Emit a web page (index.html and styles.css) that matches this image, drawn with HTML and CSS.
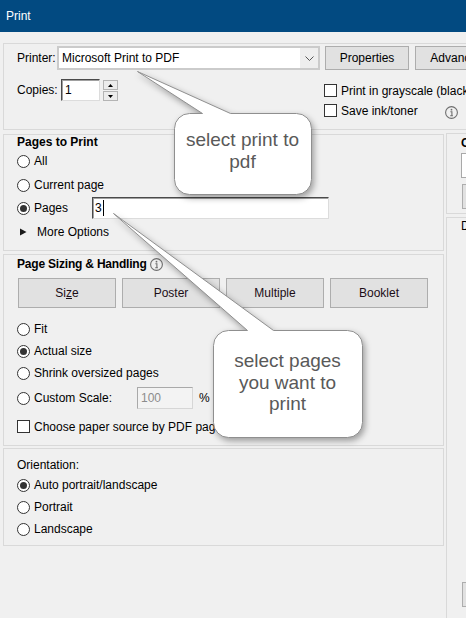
FILE: index.html
```html
<!DOCTYPE html>
<html>
<head>
<meta charset="utf-8">
<title>Print</title>
<link rel="stylesheet" href="styles.css">
</head>
<body>
<div class="window">
  <div class="titlebar">Print</div>
  <div class="content">
    <div class="group top">
      <div class="row1">
        <span class="lbl-printer">Printer:</span>
        <div class="select">
          <span class="select-text">Microsoft Print to PDF</span>
          <span class="select-btn"><svg width="9" height="5" viewBox="0 0 9 5"><polyline points="0.5,0.5 4.5,4.5 8.5,0.5" fill="none" stroke="#555" stroke-width="1"/></svg></span>
        </div>
        <button class="btn btn-props">Properties</button>
        <button class="btn btn-adv">Advanced</button>
      </div>
      <div class="row2">
        <div class="copies">
          <span class="lbl-copies">Copies:</span>
          <div class="field input-copies">1</div>
          <div class="spin">
            <span class="spin-btn"><svg width="5" height="3" viewBox="0 0 5 3"><polygon points="0,3 2.5,0 5,3" fill="#000"/></svg></span>
            <span class="spin-btn"><svg width="5" height="3" viewBox="0 0 5 3"><polygon points="0,0 2.5,3 5,0" fill="#000"/></svg></span>
          </div>
        </div>
        <div class="checks">
          <div class="check"><span class="cbox"></span>Print in grayscale (black and white)</div>
          <div class="check"><span class="cbox"></span><span class="ink-text">Save ink/toner</span>
            <svg class="info info-ink" width="13" height="13" viewBox="0 0 13 13"><circle cx="6.5" cy="6.5" r="5.9" fill="none" stroke="#6e6e6e" stroke-width="1.1"/><circle cx="6.5" cy="3.7" r="0.9" fill="#6e6e6e"/><path d="M5.4 5.7h1.5v4.1M5.2 9.8h2.7" stroke="#6e6e6e" stroke-width="1.1" fill="none"/></svg>
          </div>
        </div>
      </div>
    </div>

    <div class="cols">
      <div class="left">
        <div class="group pages">
          <div class="gtitle">Pages to Print</div>
          <div class="radio-row"><span class="radio"></span>All</div>
          <div class="radio-row r-current"><span class="radio"></span>Current page</div>
          <div class="radio-row r-pages"><span class="radio on"></span><span class="pages-lbl">Pages</span>
            <div class="field pages-input"><span>3</span><span class="caret"></span></div>
          </div>
          <div class="radio-row r-more"><svg class="tri" width="7" height="8" viewBox="0 0 7 8"><polygon points="0,0.5 6.5,4 0,7.5" fill="#1a1a1a"/></svg><span class="more-text">More Options</span></div>
        </div>

        <div class="group sizing">
          <div class="stitle"><span class="gtitle-inline">Page Sizing &amp; Handling</span>
            <svg class="info info-size" width="13" height="13" viewBox="0 0 13 13"><circle cx="6.5" cy="6.5" r="5.9" fill="none" stroke="#6e6e6e" stroke-width="1.1"/><circle cx="6.5" cy="3.7" r="0.9" fill="#6e6e6e"/><path d="M5.4 5.7h1.5v4.1M5.2 9.8h2.7" stroke="#6e6e6e" stroke-width="1.1" fill="none"/></svg>
          </div>
          <div class="sbtns">
            <button class="btn sbtn">Si<u>z</u>e</button>
            <button class="btn sbtn">Poster</button>
            <button class="btn sbtn">Multiple</button>
            <button class="btn sbtn">Booklet</button>
          </div>
          <div class="radio-row r-fit"><span class="radio"></span>Fit</div>
          <div class="radio-row"><span class="radio on"></span>Actual size</div>
          <div class="radio-row"><span class="radio"></span>Shrink oversized pages</div>
          <div class="radio-row r-custom"><span class="radio"></span><span class="custom-lbl">Custom Scale:</span>
            <div class="field scale-input">100</div><span class="pct">%</span>
          </div>
          <div class="check r-choose"><span class="cbox"></span>Choose paper source by PDF page size</div>
        </div>

        <div class="group orient">
          <div class="otitle">Orientation:</div>
          <div class="radio-row"><span class="radio on"></span>Auto portrait/landscape</div>
          <div class="radio-row"><span class="radio"></span>Portrait</div>
          <div class="radio-row"><span class="radio"></span>Landscape</div>
        </div>
      </div>

      <div class="right">
        <div class="group rbox1">
          <div class="rtitle">Comments &amp; Forms</div>
          <div class="rselect"></div>
          <div class="rbtn"></div>
        </div>
        <div class="group rbox2">
          <div class="rdoc">Document: 8.5 x 11.0in</div>
          <div class="rbtn rbtn2"></div>
        </div>
      </div>
    </div>
  </div>

  <div class="callout callout1">
    <svg width="200" height="150" viewBox="0 0 200 150">
      <path d="M59.5,53.5 L72.5,53.5 L7.5,11.5 L100.5,53.5 L166.5,53.5 A15,15 0 0 1 181.5,68.5 L181.5,119.5 A15,15 0 0 1 166.5,134.5 L59.5,134.5 A15,15 0 0 1 44.5,119.5 L44.5,68.5 A15,15 0 0 1 59.5,53.5 Z" fill="#fff" stroke="#8f8f8f" stroke-width="1"/>
    </svg>
    <div class="callout-text ct1">select print to<br>pdf</div>
  </div>

  <div class="callout callout2">
    <svg width="280" height="250" viewBox="0 0 280 250">
      <path d="M128.5,130.5 L147.5,130.5 L13.5,13.5 L173.5,130.5 L247.5,130.5 A15,15 0 0 1 262.5,145.5 L262.5,222.5 A15,15 0 0 1 247.5,237.5 L128.5,237.5 A15,15 0 0 1 113.5,222.5 L113.5,145.5 A15,15 0 0 1 128.5,130.5 Z" fill="#fff" stroke="#8f8f8f" stroke-width="1"/>
    </svg>
    <div class="callout-text ct2">select pages<br>you want to<br>print</div>
  </div>
</div>
</body>
</html>
```

FILE: styles.css
```css
* { box-sizing: border-box; }

body {
  margin: 0;
  background: #f0f0f0;
  font-family: "Liberation Sans", Arial, sans-serif;
  font-size: 12px;
  color: #000;
}

.window {
  width: 466px;
  height: 618px;
  overflow: hidden;
  position: relative;
  background: #f0f0f0;
}

.titlebar {
  height: 32px;
  background: #024a81;
  color: #fff;
  padding-left: 6px;
  line-height: 33px;
  font-size: 12px;
}

.content { padding-left: 3px; }

.group { border: 1px solid #d9d9d9; }

/* ---------- top group ---------- */
.top {
  margin-top: 11px;
  height: 87px;
  width: 520px;
  padding: 2px 0 0 13px;
}

.row1 {
  display: flex;
  align-items: center;
  height: 24px;
  white-space: nowrap;
}

.lbl-printer { width: 40px; flex: none; }

.select {
  width: 263px;
  height: 24px;
  flex: none;
  border: 2px solid #cbcbcb;
  background: #fff;
  display: flex;
  align-items: stretch;
}

.select-text {
  flex: 1;
  padding-left: 3px;
  line-height: 20px;
}

.select-btn {
  width: 18px;
  background: #eeeeee;
  display: flex;
  align-items: center;
  justify-content: center;
}

.btn {
  height: 24px;
  background: #e1e1e1;
  border: 1px solid #adadad;
  font: inherit;
  color: #000;
  padding: 0;
  white-space: nowrap;
  overflow: hidden;
}

.btn-props { width: 84px; margin-left: 5px; flex: none; }
.btn-adv { width: 84px; margin-left: 6px; flex: none; }

.row2 {
  display: flex;
  margin-top: 9px;
}

.copies {
  width: 307px;
  flex: none;
  display: flex;
  align-items: flex-start;
}

.lbl-copies { width: 44px; line-height: 22px; flex: none; }

.field {
  background: #fff;
  border: 1px solid;
  border-color: #4a4a4a #dcdcdc #dcdcdc #4a4a4a;
  box-shadow: inset 1px 1px 0 #a0a0a0;
}

.input-copies {
  width: 39px;
  height: 22px;
  flex: none;
  padding-left: 3px;
  line-height: 20px;
}

.spin {
  margin-left: 3px;
  margin-top: 1px;
  width: 15px;
  flex: none;
  display: flex;
  flex-direction: column;
  gap: 1px;
}

.spin-btn {
  height: 10px;
  border: 1px solid #b4b4b4;
  background: #ececec;
  display: flex;
  align-items: center;
  justify-content: center;
}

.checks {
  margin-top: 5px;
  display: flex;
  flex-direction: column;
  gap: 7px;
}

.check {
  display: flex;
  align-items: center;
  height: 13px;
  white-space: nowrap;
}

.cbox {
  width: 13px;
  height: 13px;
  border: 1px solid #333;
  background: #fff;
  margin-right: 4px;
  flex: none;
}

.ink-text { width: 104px; flex: none; }
.info { flex: none; }
.info-ink { margin-top: 3px; }

/* ---------- columns ---------- */
.cols {
  display: flex;
  align-items: flex-start;
  gap: 2px;
}

.left {
  width: 441px;
  flex: none;
  margin-top: 4px;
  display: flex;
  flex-direction: column;
}

.pages { height: 117px; padding-left: 13px; }
.sizing { height: 192px; margin-top: 3px; padding-left: 13px; }
.orient { height: 98px; margin-top: 2px; padding: 8px 0 0 13px; }

.gtitle {
  font-weight: bold;
  height: 15px;
  line-height: 15px;
}

.radio-row {
  display: flex;
  align-items: center;
  height: 22px;
  white-space: nowrap;
}

.radio {
  width: 13px;
  height: 13px;
  border: 1px solid #333;
  border-radius: 50%;
  background: #fff;
  margin-right: 4px;
  flex: none;
  display: flex;
  align-items: center;
  justify-content: center;
}

.radio.on::after {
  content: "";
  width: 7px;
  height: 7px;
  border-radius: 50%;
  background: #333;
}

.r-current { margin-top: 2px; }
.r-pages { margin-top: 1px; }
.r-more { margin-top: 2px; }

.pages-lbl { width: 58px; flex: none; }

.pages-input {
  width: 237px;
  height: 22px;
  flex: none;
  display: flex;
  align-items: center;
  padding-left: 2px;
}

.caret {
  width: 1px;
  height: 16px;
  background: #000;
  margin-left: 1px;
}

.tri { margin-left: 3px; flex: none; }
.more-text { margin-left: 10px; }

.stitle {
  display: flex;
  align-items: center;
  height: 18px;
}

.gtitle-inline { font-weight: bold; letter-spacing: -0.2px; }
.info-size { margin-left: 3px; }

.sbtns {
  display: flex;
  gap: 6px;
  margin-top: 5px;
  margin-left: 1px;
}

.sbtn {
  width: 98px;
  height: 30px;
  flex: none;
  color: #1c0d16;
}

.r-fit { margin-top: 10px; }
.r-custom { margin-top: 3px; }
.custom-lbl { width: 103px; flex: none; }

.scale-input {
  width: 56px;
  height: 22px;
  flex: none;
  line-height: 20px;
  padding-left: 3px;
  color: #8c8c8c;
  background: #f3f3f3;
  border-color: #a9a9a9 #d6d6d6 #d6d6d6 #a9a9a9;
  box-shadow: none;
}

.pct { margin-left: 6px; }
.r-choose { margin-top: 11px; }

.otitle { height: 17px; line-height: 17px; }

/* ---------- right column ---------- */
.right {
  width: 100px;
  flex: none;
  margin-top: 3px;
}

.rbox1 {
  height: 81px;
  border-right: none;
  padding: 2px 0 0 14px;
}

.rtitle {
  font-weight: bold;
  line-height: 14px;
  white-space: nowrap;
}

.rselect {
  margin-top: 3px;
  height: 25px;
  border: 1px solid #a9a9a9;
  border-right: none;
  background: #fff;
}

.rbtn {
  margin-top: 6px;
  margin-left: 1px;
  height: 25px;
  border: 1px solid #adadad;
  border-right: none;
  background: #e1e1e1;
}

.rbox2 {
  margin-top: 3px;
  height: 420px;
  border-right: none;
  padding: 1px 0 0 14px;
}

.rdoc {
  line-height: 14px;
  white-space: nowrap;
}

.rbtn2 { margin-top: 349px; }

/* ---------- callouts ---------- */
.callout { position: absolute; }

.callout svg {
  position: absolute;
  left: 0;
  top: 0;
  overflow: visible;
  filter: drop-shadow(2px 3px 3px rgba(0, 0, 0, 0.35));
}

.callout1 { left: 130px; top: 60px; width: 200px; height: 150px; }
.callout2 { left: 100px; top: 200px; width: 280px; height: 250px; }

.callout-text {
  position: absolute;
  text-align: center;
  font-family: "Liberation Sans", Arial, sans-serif;
  font-size: 19px;
  line-height: 21.5px;
  color: #595959;
}

.ct1 { left: 44px; width: 137px; top: 69px; }
.ct2 { left: 113px; width: 149px; top: 150px; }
```
